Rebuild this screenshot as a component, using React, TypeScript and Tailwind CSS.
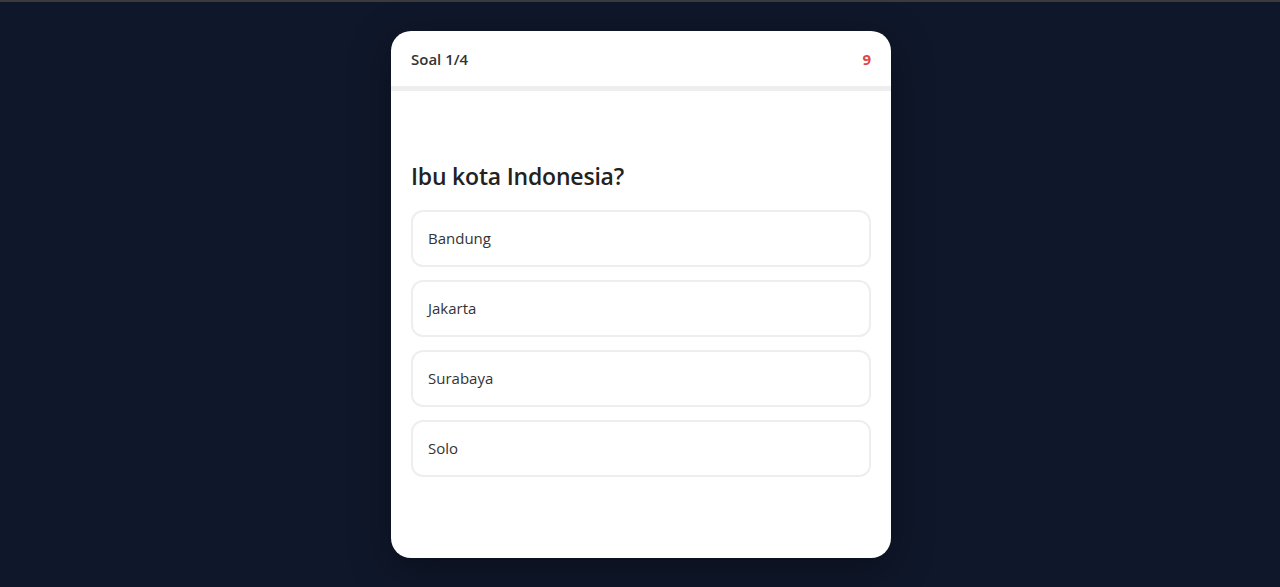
const OPTIONS = ['Bandung', 'Jakarta', 'Surabaya', 'Solo'];

export default function App() {
  return (
    <div className="min-h-[587px] bg-[#0f172a] font-['Open_Sans',sans-serif]">
      <div className="h-[2px] bg-[#3b3b3f]" />
      <div className="pt-[29px] flex justify-center">
        <div className="w-[500px] h-[527px] ml-[2px] bg-white rounded-[20px] overflow-hidden shadow-[0_10px_40px_rgba(0,0,0,0.35)] flex flex-col">
          <div className="h-[55px] pt-[2px] px-5 flex items-center justify-between">
            <span className="text-[15px] font-semibold text-[#333]">Soal 1/4</span>
            <span className="text-[15px] font-bold text-[#e04848]">9</span>
          </div>
          <div className="h-[5px] bg-[#eeeeee]" />
          <div className="px-5 pt-[69px]">
            <h2 className="text-[23px] leading-[32px] font-semibold text-[#222] mb-[18px] tracking-[-0.2px]">Ibu kota Indonesia?</h2>
            <div className="flex flex-col gap-[13px]">
              {OPTIONS.map((opt) => (
                <button
                  key={opt}
                  className="h-[57px] w-full text-left px-[15px] border-2 border-[#eeeeee] rounded-[12px] text-[15px] text-[#333] bg-white"
                >
                  {opt}
                </button>
              ))}
            </div>
          </div>
        </div>
      </div>
    </div>
  );
}
